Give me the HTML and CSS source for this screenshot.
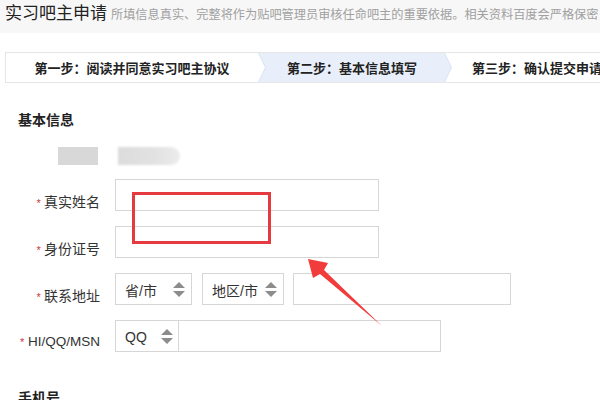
FILE: index.html
```html
<!DOCTYPE html>
<html lang="zh-CN">
<head>
<meta charset="utf-8">
<title>实习吧主申请</title>
<link rel="stylesheet" href="styles.css">
</head>
<body>
<div class="header">
  <span class="title">实习吧主申请</span><span class="sub">所填信息真实、完整将作为贴吧管理员审核任命吧主的重要依据。相关资料百度会严格保密，</span>
</div>

<div class="steps">
  <div class="step step-first">第一步：阅读并同意实习吧主协议</div>
  <div class="step step-active"><span>第二步：基本信息填写</span></div>
  <div class="step step-last">第三步：确认提交申请</div>
</div>

<div class="section">
  <h2 class="section-title">基本信息</h2>
  <div class="blurred"><span class="blur-a"></span><span class="blur-b"></span></div>

  <div class="form">
    <label class="label"><span class="star">*</span> 真实姓名</label>
    <div class="field"><div class="input w-long"></div></div>

    <label class="label"><span class="star">*</span> 身份证号</label>
    <div class="field"><div class="input w-long"></div></div>

    <label class="label"><span class="star">*</span> 联系地址</label>
    <div class="field">
      <div class="select sel-prov"><span>省/市</span>
        <svg class="updown" width="12" height="15" viewBox="0 0 12 15"><polygon points="0,6 6,0 12,6" /><polygon points="0,9 12,9 6,15" /></svg>
      </div>
      <div class="select sel-city"><span>地区/市</span>
        <svg class="updown" width="12" height="15" viewBox="0 0 12 15"><polygon points="0,6 6,0 12,6" /><polygon points="0,9 12,9 6,15" /></svg>
      </div>
      <div class="input w-addr"></div>
    </div>

    <label class="label label-latin"><span class="star">*</span> HI/QQ/MSN</label>
    <div class="field">
      <div class="combo">
        <div class="select sel-im"><span>QQ</span>
          <svg class="updown" width="12" height="15" viewBox="0 0 12 15"><polygon points="0,6 6,0 12,6" /><polygon points="0,9 12,9 6,15" /></svg>
        </div>
        <div class="combo-input"></div>
      </div>
    </div>
  </div>

  <h2 class="section-title phone">手机号</h2>
</div>

<div class="mark-rect"></div>
<svg class="mark-arrow" width="600" height="400" viewBox="0 0 600 400">
  <polygon points="308,259 328,263 324,270 382,326 320,274 313,278" />
</svg>
</body>
</html>
```

FILE: styles.css
```css
html, body {
  margin: 0;
  padding: 0;
}
body {
  width: 600px;
  height: 400px;
  overflow: hidden;
  position: relative;
  background: #fff;
  font-family: "Liberation Sans", "Noto Sans CJK SC", sans-serif;
  color: #333;
}

.header {
  height: 33px;
  background: #f7f7f7;
  padding-left: 5px;
  white-space: nowrap;
  overflow: hidden;
  line-height: 24px;
}
.title {
  font-size: 17px;
  color: #222;
  font-family: "Noto Sans CJK SC", sans-serif;
}
.sub {
  font-size: 12.2px;
  color: #a0a0a0;
  margin-left: 4px;
  font-family: "Noto Sans CJK SC", sans-serif;
}

.steps {
  margin: 19px 0 0 5px;
  width: 660px;
  height: 29px;
  border: 1px solid #e6e6e6;
  border-right: none;
  display: flex;
  font-family: "Noto Sans CJK SC", sans-serif;
  font-size: 13px;
  font-weight: bold;
  color: #222;
  line-height: 29px;
  white-space: nowrap;
}
.step {
  text-align: center;
}
.step-first {
  flex: 0 0 252px;
}
.step-active {
  flex: 0 0 194px;
  position: relative;
  background: #d9e2f3;
  clip-path: polygon(0 0, calc(100% - 7px) 0, 100% 50%, calc(100% - 7px) 100%, 0 100%, 7px 50%);
}
.step-active::before {
  content: "";
  position: absolute;
  inset: 0;
  background: #e8eefa;
  clip-path: polygon(1px 0, calc(100% - 8px) 0, calc(100% - 1px) 50%, calc(100% - 8px) 100%, 1px 100%, 8px 50%);
}
.step-active span {
  position: relative;
  padding-right: 6px;
}
.step-last {
  flex: 0 0 200px;
  margin-left: -7px;
  padding-left: 27px;
  text-align: left;
}

.section {
  padding-left: 18px;
}
.section-title {
  margin: 26px 0 0;
  font-size: 14px;
  line-height: 20px;
  font-weight: bold;
  color: #222;
  font-family: "Noto Sans CJK SC", sans-serif;
}

.blurred {
  margin: 18px 0 0 40px;
  height: 18px;
  display: flex;
}
.blur-a {
  width: 40px;
  height: 18px;
  background: #d8d8d8;
  filter: blur(0.6px);
}
.blur-b {
  margin-left: 20px;
  width: 62px;
  height: 18px;
  background: linear-gradient(90deg, #dcdcdc 0%, #e2e2e2 60%, #ececec 100%);
  border-radius: 0 9px 9px 0;
  filter: blur(1.2px);
}

.form {
  margin: 14px 0 0 -18px;
  display: grid;
  grid-template-columns: 100px auto;
  column-gap: 15px;
  row-gap: 13px;
}
.label {
  text-align: right;
  font-size: 14px;
  line-height: 20px;
  padding-top: 12px;
  color: #333;
  font-family: "Noto Sans CJK SC", sans-serif;
  white-space: nowrap;
}
.label-latin {
  font-family: "Liberation Sans", sans-serif;
  font-size: 13.5px;
}
.star {
  color: #c8353f;
  font-size: 11px;
  font-family: "Liberation Sans", sans-serif;
}
.field {
  display: flex;
  height: 32px;
}
.input {
  box-sizing: border-box;
  height: 32px;
  border: 1px solid #d6d6d6;
  background: #fff;
}
.w-long { width: 264px; }
.w-addr { width: 218px; }

.select {
  box-sizing: border-box;
  height: 32px;
  border: 1px solid #d6d6d6;
  display: flex;
  align-items: center;
  justify-content: space-between;
  padding: 2px 6px 0 9px;
  font-size: 14px;
  color: #333;
  font-family: "Liberation Sans", "Noto Sans CJK SC", sans-serif;
}
.sel-prov { width: 77px; margin-right: 10px; }
.sel-city { width: 82px; margin-right: 9px; }
.updown { fill: #8c8c8c; margin-top: -2px; }

.combo {
  box-sizing: border-box;
  width: 326px;
  height: 32px;
  border: 1px solid #d6d6d6;
  display: flex;
}
.sel-im {
  width: 63px;
  height: 30px;
  border: none;
  border-right: 1px solid #d6d6d6;
  padding-right: 5px;
}
.combo-input { flex: 1; }

.phone {
  margin-top: 35px;
}

.mark-rect {
  position: absolute;
  left: 132px;
  top: 192px;
  width: 139px;
  height: 52px;
  box-sizing: border-box;
  border: 3px solid #e53a3f;
}
.mark-arrow {
  position: absolute;
  left: 0;
  top: 0;
  pointer-events: none;
  fill: #f23b3b;
}
```
